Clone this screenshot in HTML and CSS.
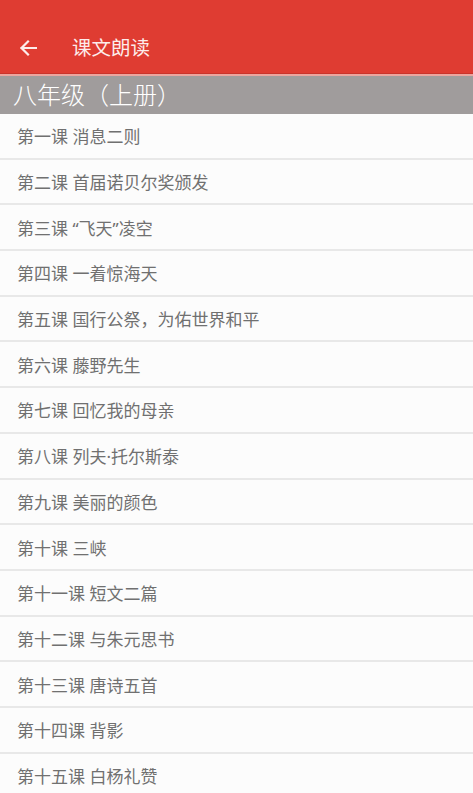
FILE: index.html
```html
<!DOCTYPE html>
<html lang="zh">
<head>
<meta charset="utf-8">
<link rel="stylesheet" href="styles.css">
</head>
<body>
<header class="appbar">
  <svg class="back" viewBox="0 0 18 18" width="18" height="18"><path d="M17 9H2.5M9 2.5L2.5 9 9 15.5" fill="none" stroke="#fdeceb" stroke-width="2.2" stroke-linecap="square"/></svg>
  <span class="title">课文朗读</span>
</header>
<div class="section">八年级（上册）</div>
<ul class="list">
  <li>第一课 消息二则</li>
  <li>第二课 首届诺贝尔奖颁发</li>
  <li>第三课 “飞天”凌空</li>
  <li>第四课 一着惊海天</li>
  <li>第五课 国行公祭，为佑世界和平</li>
  <li>第六课 藤野先生</li>
  <li>第七课 回忆我的母亲</li>
  <li>第八课 列夫·托尔斯泰</li>
  <li>第九课 美丽的颜色</li>
  <li>第十课 三峡</li>
  <li>第十一课 短文二篇</li>
  <li>第十二课 与朱元思书</li>
  <li>第十三课 唐诗五首</li>
  <li>第十四课 背影</li>
  <li>第十五课 白杨礼赞</li>
</ul>
</body>
</html>
```
FILE: styles.css
```css
html, body {
  margin: 0;
  padding: 0;
  background: #fcfcfc;
  font-family: "Noto Sans", "Noto Sans CJK SC", sans-serif;
  overflow: hidden;
}
.appbar {
  box-sizing: border-box;
  height: 74px;
  padding: 22px 0 0 19px;
  background: #df3c32;
  border-bottom: 1px solid #c9342b;
  box-shadow: 0 2px 0 #eca59f;
  display: flex;
  align-items: center;
  margin-bottom: 2px;
}
.back {
  display: block;
}
.title {
  margin-left: 35px;
  color: #fdeceb;
  font-size: 19.5px;
  line-height: 1;
}
.section {
  height: 38px;
  background: #a09c9c;
  color: #ffffff;
  font-size: 24px;
  font-weight: 300;
  line-height: 38px;
  padding-left: 13px;
}
.list {
  list-style: none;
  margin: 0;
  padding: 0;
}
.list li {
  box-sizing: border-box;
  height: 45.7px;
  border-bottom: 2px solid #e8e8e8;
  display: flex;
  align-items: center;
  padding: 0 0 0 17px;
  font-size: 17px;
  color: #707070;
  background: #fcfcfc;
}
```
